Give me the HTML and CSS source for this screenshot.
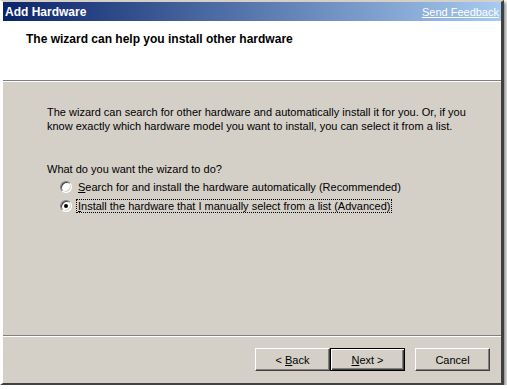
FILE: index.html
```html
<!DOCTYPE html>
<html lang="en">
<head>
    <meta charset="UTF-8">
    <title>Add Hardware</title>
    <link rel="stylesheet" href="styles.css">
</head>
<body>
    <div class="window">
        <div class="titlebar">
            <span class="title">Add Hardware</span>
            <a class="feedback" href="#">Send Feedback</a>
        </div>

        <!-- Wizard header -->
        <div class="wizard-header">
            <h1>The wizard can help you install other hardware</h1>
        </div>

        <!-- Wizard body -->
        <div class="wizard-body">
            <p class="intro">The wizard can search for other hardware and automatically install it for you. Or, if you know exactly which hardware model you want to install, you can select it from a list.</p>
            <p class="question">What do you want the wizard to do?</p>
            <div class="options">
                <label class="option">
                    <span class="radio"></span>
                    <span class="option-text"><u>S</u>earch for and install the hardware automatically (Recommended)</span>
                </label>
                <label class="option">
                    <span class="radio checked"></span>
                    <span class="option-text focused"><u>I</u>nstall the hardware that I manually select from a list (Advanced)</span>
                </label>
            </div>
        </div>

        <!-- Buttons -->
        <div class="wizard-footer">
            <div class="nav-buttons">
                <button type="button" class="btn">&lt; <u>B</u>ack</button>
                <button type="button" class="btn default"><u>N</u>ext &gt;</button>
            </div>
            <button type="button" class="btn cancel">Cancel</button>
        </div>
    </div>
</body>
</html>
```

FILE: styles.css
```css
body {
    margin: 0;
    padding: 0;
    background-color: #fff;
    font-family: "Liberation Sans", Arial, sans-serif;
    font-size: 11px;
    color: #000;
}

.window {
    width: 504px;
    height: 385px;
    box-sizing: border-box;
    background-color: #d4d0c8;
    border-top: 2px solid #d4d0c8;
    border-left: 3px solid #fff;
    border-right: 3px solid #404040;
    border-bottom: 2px solid #404040;
    box-shadow: 2px 2px 3px rgba(0, 0, 0, 0.45);
    display: flex;
    flex-direction: column;
}

.titlebar {
    height: 19px;
    background: linear-gradient(to right, #0a246a, #a6caf0);
    display: flex;
    align-items: center;
    justify-content: space-between;
    padding: 0 2px 0 2px;
}

.title {
    color: #fff;
    font-weight: bold;
    font-size: 12px;
}

.feedback {
    color: #fff;
    font-size: 11px;
    text-decoration: underline;
}

.wizard-header {
    height: 59px;
    flex-shrink: 0;
    background-color: #fff;
    border-bottom: 1px solid #808080;
    box-shadow: 0 1px 0 #fff;
    padding-left: 23px;
}

.wizard-header h1 {
    margin: 11px 0 0 0;
    font-size: 12px;
    font-weight: bold;
}

.wizard-body {
    flex: 1;
    padding: 24px 20px 0 44px;
}

.intro {
    margin: 0;
    line-height: 14px;
    width: 425px;
}

.question {
    margin: 30px 0 5px 0;
}

.options {
    display: flex;
    flex-direction: column;
    gap: 5px;
    padding-left: 13px;
}

.option {
    display: flex;
    align-items: center;
    gap: 4px;
}

.radio {
    width: 12px;
    height: 12px;
    box-sizing: border-box;
    border-radius: 50%;
    background-color: #fff;
    border-top: 1px solid #808080;
    border-left: 1px solid #808080;
    border-right: 1px solid #fff;
    border-bottom: 1px solid #fff;
    box-shadow: inset 1px 1px 0 #404040, inset -1px -1px 0 #d4d0c8;
    display: flex;
    align-items: center;
    justify-content: center;
}

.radio.checked::after {
    content: "";
    width: 4px;
    height: 4px;
    border-radius: 50%;
    background-color: #000;
}

.option-text {
    padding: 0 1px;
    border: 1px dotted transparent;
}

.option-text.focused {
    border-color: #000;
}

.wizard-footer {
    height: 48px;
    flex-shrink: 0;
    box-sizing: border-box;
    border-top: 1px solid #808080;
    box-shadow: inset 0 1px 0 #fff;
    display: flex;
    justify-content: flex-end;
    align-items: flex-start;
    gap: 10px;
    padding: 12px 11px 0 0;
}

.nav-buttons {
    display: flex;
}

.btn {
    width: 75px;
    height: 23px;
    font-family: "Liberation Sans", Arial, sans-serif;
    font-size: 11px;
    color: #000;
    background-color: #d4d0c8;
    border-top: 1px solid #fff;
    border-left: 1px solid #fff;
    border-right: 1px solid #404040;
    border-bottom: 1px solid #404040;
    box-shadow: inset -1px -1px 0 #808080;
    padding: 0;
}

.btn.default {
    border: 1px solid #000;
    box-shadow: inset 1px 1px 0 #fff, inset -1px -1px 0 #404040, inset -2px -2px 0 #808080;
}
```
